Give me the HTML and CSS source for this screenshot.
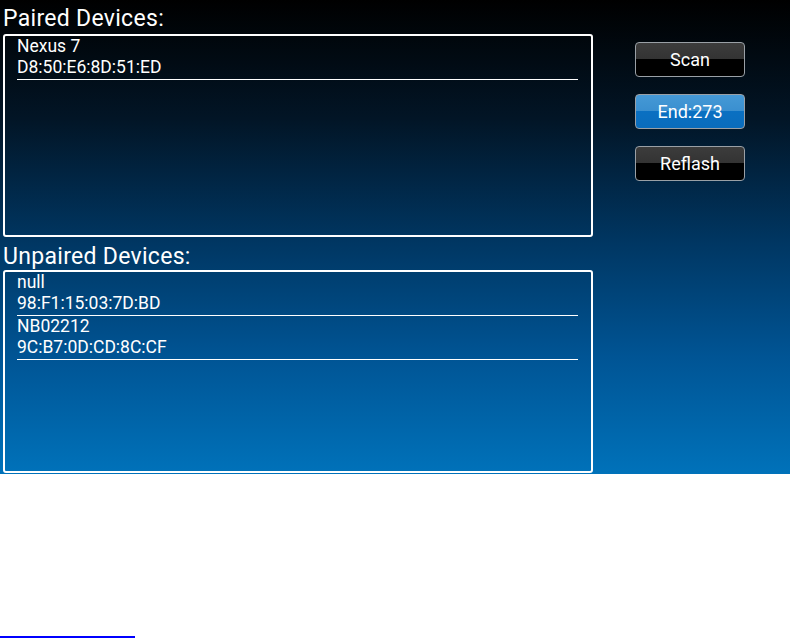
FILE: index.html
```html
<!DOCTYPE html>
<html lang="en">
<head>
    <meta charset="UTF-8">
    <meta name="viewport" content="width=device-width, initial-scale=1.0">
    <title>Bluetooth Devices</title>
    <link rel="stylesheet" href="styles.css">
</head>
<body>
    <div class="screen">
        <div class="lists">
            <h2>Paired Devices:</h2>
            <div class="device-box">
                <div class="device">
                    <div>Nexus 7</div>
                    <div>D8:50:E6:8D:51:ED</div>
                </div>
            </div>

            <h2>Unpaired Devices:</h2>
            <div class="device-box">
                <div class="device">
                    <div>null</div>
                    <div>98:F1:15:03:7D:BD</div>
                </div>
                <div class="device">
                    <div>NB02212</div>
                    <div>9C:B7:0D:CD:8C:CF</div>
                </div>
            </div>
        </div>

        <div class="actions">
            <button class="btn">Scan</button>
            <button class="btn btn-active">End:273</button>
            <button class="btn">Reflash</button>
        </div>
    </div>
    <div class="footer-line"></div>
</body>
</html>
```

FILE: styles.css
```css
* { margin: 0; padding: 0; box-sizing: border-box; }
body {
    font-family: Roboto, 'Noto Sans', sans-serif;
    background: #fff;
    color: #fff;
    width: 790px;
    height: 639px;
    overflow: hidden;
}
.screen {
    height: 474px;
    display: flex;
    background: linear-gradient(to bottom, #000000 0%, #021526 25%, #003560 50%, #005494 75%, #0072ba 100%);
}
.lists {
    width: 593px;
    padding-left: 3px;
}
h2 {
    font-weight: normal;
    font-size: 23px;
    line-height: 27px;
    letter-spacing: 0.3px;
    height: 34px;
    padding-top: 5px;
}
.lists h2:nth-of-type(2) {
    height: 33px;
    padding-top: 6px;
}
.device-box {
    height: 203px;
    border: 2px solid #fff;
    border-radius: 3px;
    padding: 0 13px 0 12px;
}
.device {
    font-size: 17.5px;
    line-height: 21px;
    padding-bottom: 1px;
    border-bottom: 1px solid #fff;
}
.actions {
    display: flex;
    flex-direction: column;
    gap: 17px;
    padding: 42px 0 0 42px;
}
.btn {
    width: 110px;
    height: 35px;
    border: 1px solid #9aa0a6;
    border-radius: 4px;
    background: linear-gradient(to bottom, #3c3c3c 0%, #333 50%, #000 50%, #000 100%);
    color: #fff;
    font-family: Roboto, 'Noto Sans', sans-serif;
    font-size: 18px;
}
.btn-active {
    background: linear-gradient(to bottom, #4599d6 0%, #3a8fcf 50%, #0a70c2 50%, #0a6cbc 100%);
}
.footer-line {
    margin-top: 162px;
    width: 135px;
    height: 2px;
    background: #0000ff;
}
```
